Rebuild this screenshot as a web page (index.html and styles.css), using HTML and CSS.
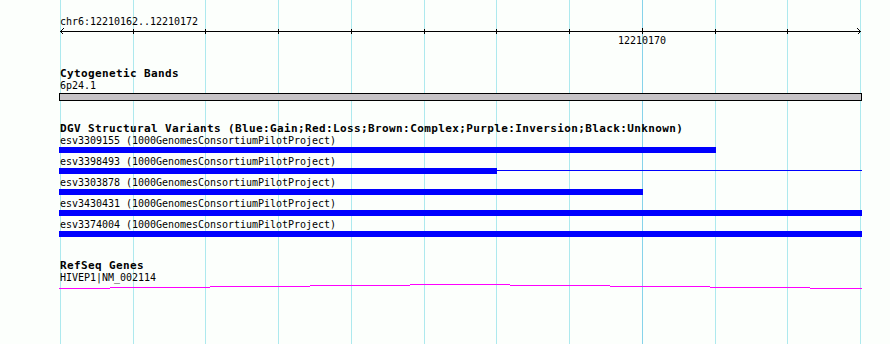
FILE: index.html
```html
<!DOCTYPE html>
<html>
  <head>
    <title>chr6:12210162..12210172</title>
    <link rel="stylesheet" href="styles.css">
  </head>
  <body>
    <div id="view">
      <svg id="grid" width="890" height="344">
        <rect x="60" y="0" width="1" height="344" />
        <rect x="133" y="0" width="1" height="344" />
        <rect x="205" y="0" width="1" height="344" />
        <rect x="278" y="0" width="1" height="344" />
        <rect x="351" y="0" width="1" height="344" />
        <rect x="424" y="0" width="1" height="344" />
        <rect x="496" y="0" width="1" height="344" />
        <rect x="569" y="0" width="1" height="344" />
        <rect class="major" x="642" y="0" width="1" height="344" />
        <rect x="715" y="0" width="1" height="344" />
        <rect x="787" y="0" width="1" height="344" />
        <rect x="860" y="0" width="1" height="344" />
      </svg>

      <div id="tracks">
        <div class="track ruler">
          <div class="label">chr6:12210162..12210172</div>
          <svg class="axis" width="803" height="8">
            <rect x="1" y="4" width="801" height="1" />
            <path d="M1.5 4.5 L4.5 1.5 M1.5 4.5 L4.5 7.5 M801.5 4.5 L798.5 1.5 M801.5 4.5 L798.5 7.5" />
            <rect x="74" y="2" width="1" height="5" />
            <rect x="146" y="2" width="1" height="5" />
            <rect x="219" y="2" width="1" height="5" />
            <rect x="292" y="2" width="1" height="5" />
            <rect x="365" y="2" width="1" height="5" />
            <rect x="437" y="2" width="1" height="5" />
            <rect x="510" y="2" width="1" height="5" />
            <rect x="583" y="1" width="1" height="6" />
            <rect x="656" y="2" width="1" height="5" />
            <rect x="728" y="2" width="1" height="5" />
          </svg>
          <div class="label tick" style="padding-left: 559px">12210170</div>
        </div>

        <div class="track cyto">
          <div class="title">Cytogenetic Bands</div>
          <div class="label">6p24.1</div>
          <div class="band"></div>
        </div>

        <div class="track dgv">
          <div class="title">DGV Structural Variants (Blue:Gain;Red:Loss;Brown:Complex;Purple:Inversion;Black:Unknown)</div>
          <div class="feature">
            <div class="label">esv3309155 (1000GenomesConsortiumPilotProject)</div>
            <div class="bar"><span class="block" style="width: 657px"></span></div>
          </div>
          <div class="feature">
            <div class="label">esv3398493 (1000GenomesConsortiumPilotProject)</div>
            <div class="bar" style="width: 803px"><span class="block" style="width: 438px"></span><span class="thin"></span></div>
          </div>
          <div class="feature">
            <div class="label">esv3303878 (1000GenomesConsortiumPilotProject)</div>
            <div class="bar"><span class="block" style="width: 584px"></span></div>
          </div>
          <div class="feature">
            <div class="label">esv3430431 (1000GenomesConsortiumPilotProject)</div>
            <div class="bar"><span class="block" style="width: 803px"></span></div>
          </div>
          <div class="feature">
            <div class="label">esv3374004 (1000GenomesConsortiumPilotProject)</div>
            <div class="bar"><span class="block" style="width: 803px"></span></div>
          </div>
        </div>

        <div class="track refseq">
          <div class="title">RefSeq Genes</div>
          <div class="label">HIVEP1|NM_002114</div>
          <svg class="gene" width="803" height="7">
            <rect x="0" y="5" width="51" height="1" />
            <rect x="51" y="4" width="100" height="1" />
            <rect x="151" y="3" width="100" height="1" />
            <rect x="251" y="2" width="100" height="1" />
            <rect x="351" y="1" width="100" height="1" />
            <rect x="451" y="2" width="100" height="1" />
            <rect x="551" y="3" width="100" height="1" />
            <rect x="651" y="4" width="100" height="1" />
            <rect x="751" y="5" width="52" height="1" />
          </svg>
        </div>
      </div>
    </div>
  </body>
</html>
```

FILE: styles.css
```css
body { margin: 0; background: #fcfffc; }

#view { position: relative; width: 890px; height: 344px; overflow: hidden; background: #fcfffc; }
#grid { position: absolute; left: 0; top: 0; shape-rendering: crispEdges; }
#grid rect { fill: #ade9ee; }
#grid rect.major { fill: #86d3ea; }

#tracks { position: relative; padding: 16px 0 0 59px; }

.label { font-family: "DejaVu Sans Mono", "Liberation Mono", monospace; font-size: 10px; line-height: 11px; height: 11px; color: #000; padding-left: 1px; white-space: pre; letter-spacing: -0.02px; }
.title { font-family: "DejaVu Sans Mono", "Liberation Mono", monospace; font-weight: bold; font-size: 11px; line-height: 13px; height: 13px; letter-spacing: 0.38px; color: #000; padding-left: 1px; white-space: pre; }

.axis { display: block; shape-rendering: crispEdges; }
.axis rect { fill: #000; }
.axis path { stroke: #000; stroke-width: 1; fill: none; }

.cyto { margin-top: 21px; }
.band { margin-top: 2px; width: 801px; height: 6px; border: 1px solid #000; background: #c6c3c6; }

.dgv { margin-top: 21px; }
.feature { height: 21px; }
.bar { display: flex; align-items: flex-start; margin-top: 1px; height: 6px; }
.bar .block { height: 6px; background: #0000ff; }
.bar .thin { flex: 1; height: 1px; margin-top: 2px; background: #0000ff; }

.refseq { margin-top: 19px; }
.gene { display: block; shape-rendering: crispEdges; }
.gene rect { fill: #ff00ff; }
```
